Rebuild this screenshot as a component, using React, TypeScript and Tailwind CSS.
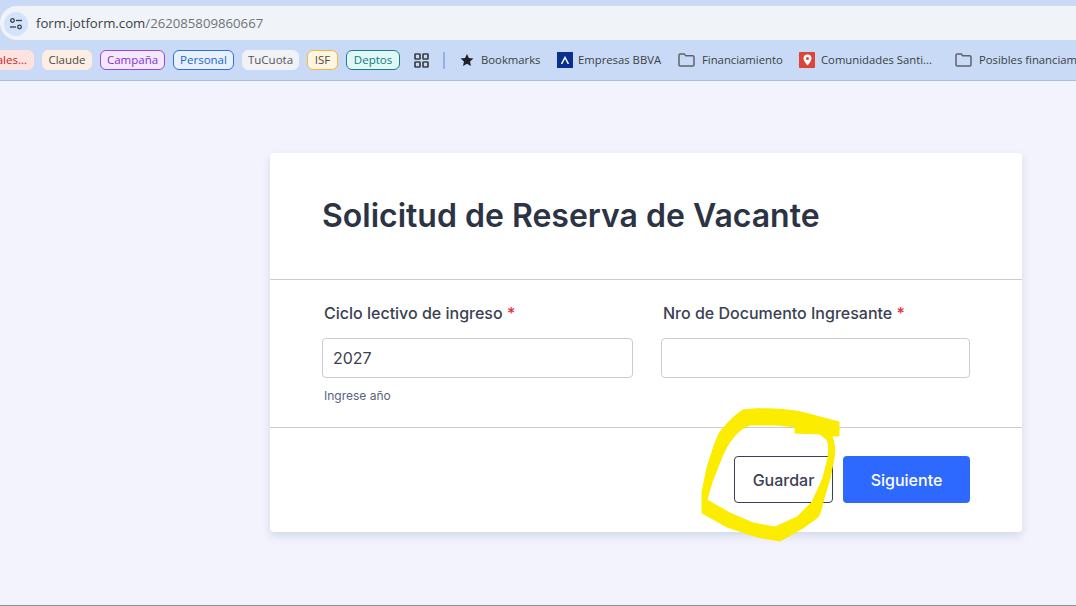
import React from "react";

const chrome = { fontFamily: '"Open Sans","Noto Sans",sans-serif' };

function Chip({ label, w, cls }: { label: string; w: string; cls: string }) {
  return (
    <div className={`flex h-[20px] shrink-0 items-center justify-center rounded-[6px] border text-[11.5px] ${w} ${cls}`}>
      {label}
    </div>
  );
}

function Folder() {
  return (
    <svg width="17" height="14" viewBox="0 0 17 14" fill="none" className="shrink-0">
      <path d="M1 2.2C1 1.5 1.5 1 2.2 1H6.2L7.8 2.8H14.8C15.5 2.8 16 3.3 16 4V11.8C16 12.5 15.5 13 14.8 13H2.2C1.5 13 1 12.5 1 11.8V2.2Z" stroke="#5f6368" strokeWidth="1.5" />
    </svg>
  );
}

function Mark({ label, w, icon, gap }: { label: string; w: string; icon: React.ReactNode; gap: string }) {
  return (
    <div className={`flex shrink-0 items-center whitespace-nowrap text-[11.3px] text-[#3c4043] ${w} ${gap}`}>
      {icon}
      <span>{label}</span>
    </div>
  );
}

export default function App() {
  return (
    <div className="flex h-[606px] w-[1076px] flex-col overflow-hidden bg-[#f3f3fe]" style={{ fontFamily: 'Inter,sans-serif' }}>
      <div className="h-[6px] shrink-0 bg-[#c8daf5]" />
      <div className="flex h-[34px] shrink-0 bg-[#c8daf5]">
        <div className="flex flex-1 items-center gap-[8px] rounded-l-[17px] bg-[#f0f4f9] pl-[4px] pt-[2px]" style={chrome}>
          <div className="flex h-[24px] w-[24px] items-center justify-center rounded-full bg-[#d3e3fd]">
            <svg width="14" height="14" viewBox="0 0 14 14" fill="none" stroke="#3c4043" strokeWidth="1.3">
              <circle cx="3.5" cy="3.5" r="1.8" />
              <path d="M7 3.5H13" />
              <path d="M1 10H7" />
              <circle cx="10.5" cy="10" r="1.8" />
            </svg>
          </div>
          <span className="text-[13.2px] text-[#3c4043]">
            form.jotform.com<span className="text-[#6f7378]">/262085809860667</span>
          </span>
        </div>
      </div>

      <div className="flex h-[41px] shrink-0 items-center overflow-hidden border-b border-[#aebdd6] bg-[#c8daf5]" style={chrome}>
        <div className="ml-[-8px] flex items-center gap-[8px]">
          <Chip label="ales..." w="w-[42px]" cls="border-[#fde3df] bg-[#fde3df] text-[#c5221f] justify-end pr-[6px]" />
          <Chip label="Claude" w="w-[50px]" cls="border-[#fdeee4] bg-[#fdeee4] text-[#4a4a4a]" />
          <Chip label="Campaña" w="w-[65px]" cls="border-[#9a4ad8] bg-[#f3e8fd] text-[#8430ce]" />
          <Chip label="Personal" w="w-[61px]" cls="border-[#2f72d0] bg-[#e8f0fe] text-[#1a66cc]" />
          <Chip label="TuCuota" w="w-[57px]" cls="border-[#f0f2f5] bg-[#f0f2f5] text-[#50555a]" />
          <Chip label="ISF" w="w-[31px]" cls="border-[#f5b83d] bg-[#fef6e0] text-[#4a4a4a]" />
          <Chip label="Deptos" w="w-[54px]" cls="border-[#1d8083] bg-[#e0f7f6] text-[#0f7b7c]" />
        </div>
        <svg width="15" height="15" viewBox="0 0 15 15" fill="none" stroke="#3c4043" strokeWidth="1.7" className="ml-[14px] shrink-0">
          <rect x="1" y="1" width="5" height="5" rx="0.5" />
          <rect x="9" y="1" width="5" height="5" rx="0.5" />
          <rect x="1" y="9" width="5" height="5" rx="0.5" />
          <rect x="9" y="9" width="5" height="5" rx="0.5" />
        </svg>
        <div className="ml-[14px] mr-[15px] h-[17px] w-[2px] shrink-0 bg-[#8fb2e6]" />
        <Mark
          label="Bookmarks"
          w="w-[97px]"
          gap="gap-[7px]"
          icon={
            <svg width="14" height="14" viewBox="0 0 24 24" fill="#202124" className="shrink-0">
              <path d="M12 1.5l3.2 7.1 7.8.8-5.8 5.2 1.6 7.7L12 18.4l-6.8 3.9 1.6-7.7L1 9.4l7.8-.8z" />
            </svg>
          }
        />
        <Mark
          label="Empresas BBVA"
          w="w-[121px]"
          gap="gap-[5px]"
          icon={
            <div className="flex h-[16px] w-[16px] shrink-0 items-center justify-center bg-[#0a2f8f]">
              <svg width="10" height="8" viewBox="0 0 10 8" fill="none" stroke="#fff" strokeWidth="1.5">
                <path d="M1.5 8L5 1.5 8.5 8" />
              </svg>
            </div>
          }
        />
        <Mark label="Financiamiento" w="w-[121px]" gap="gap-[7px]" icon={<Folder />} />
        <Mark
          label="Comunidades Santi..."
          w="w-[156px]"
          gap="gap-[6px]"
          icon={
            <div className="flex h-[16px] w-[16px] shrink-0 items-center justify-center rounded-[1px] bg-[#db4437]">
              <svg width="9" height="12" viewBox="0 0 9 12">
                <path d="M4.5 0.5A4 4 0 0 1 8.5 4.5C8.5 7 4.5 11.5 4.5 11.5S.5 7 .5 4.5A4 4 0 0 1 4.5 .5Z" fill="#fff" />
                <circle cx="4.5" cy="4.5" r="1.5" fill="#db4437" />
              </svg>
            </div>
          }
        />
        <Mark label="Posibles financiamiento" w="w-[130px]" gap="gap-[7px]" icon={<Folder />} />
      </div>

      <div className="flex flex-1 justify-end border-b border-[#8d8d9c] pr-[54px] pt-[72px]">
        <div className="h-[379px] w-[752px] rounded-[4px] bg-white text-[#2c3345] shadow-[0_4px_8px_rgba(87,114,147,0.2)]">
          <div className="flex h-[127px] items-start border-b border-[#c8ccd4] pl-[52px] pt-[43px]">
            <h1 className="text-[32px] font-semibold leading-[40px]">Solicitud de Reserva de Vacante</h1>
          </div>
          <div className="flex h-[148px] gap-[28px] border-b border-[#c8ccd4] pl-[52px] pt-[21px]">
            <div className="w-[311px]">
              <label className="block pl-[2px] text-[16px] font-medium leading-[24px] text-[#3a4152]">
                Ciclo lectivo de ingreso <span className="text-[#e0303c]">*</span>
              </label>
              <div className="mt-[13px] flex h-[40px] items-center rounded-[4px] border border-[#c8ccd4] px-[10px] pb-[1px] text-[16px] text-[#3a4152]">
                2027
              </div>
              <div className="mt-[10px] pl-[2px] text-[12px] leading-[16px] text-[#57647e]">Ingrese año</div>
            </div>
            <div className="w-[309px]">
              <label className="block pl-[2px] text-[16px] font-medium leading-[24px] text-[#3a4152]">
                Nro de Documento Ingresante <span className="text-[#e0303c]">*</span>
              </label>
              <div className="mt-[13px] h-[40px] rounded-[4px] border border-[#c8ccd4]" />
            </div>
          </div>
          <div className="flex justify-end gap-[10px] pr-[52px] pt-[28px]">
            <button className="h-[47px] w-[99px] rounded-[4px] border border-[#3a4152] bg-white text-[16px] font-medium text-[#3a4152]">
              Guardar
            </button>
            <button className="h-[47px] w-[127px] rounded-[4px] bg-[#2e69ff] text-[16px] font-medium text-white">
              Siguiente
            </button>
          </div>
        </div>
      </div>

      <svg className="pointer-events-none absolute left-0 top-0" width="1076" height="606" fill="#fbec00" stroke="#fbec00" strokeWidth="1" strokeLinejoin="round">
        <path
          fillRule="evenodd"
          d="M743 410 C755 408 785 408 805 413 L839 422 L839 436 L832 436 C835 445 835 452 834 458 L830 478 L823 502 C821 510 820 515 817 518 L803 528 L780 541 L757 537 L727 527 L702 513 L702 492 L707 468 C711 455 715 441 720 432 C727 423 735 415 743 410 Z M750 425 C742 428 738 432 733 438 C728 444 725 450 722 457 L712 482 L707 500 L730 513 L753 523 L775 527 L797 517 L812 502 L823 478 L828 458 C829 450 829 444 827 440 L820 434 L795 433 L795 427 L777 425 Z"
        />
      </svg>
    </div>
  );
}
